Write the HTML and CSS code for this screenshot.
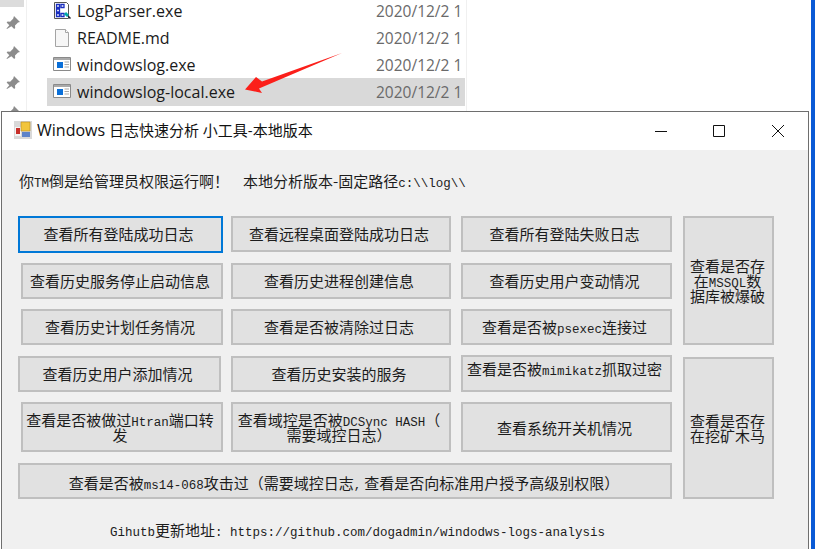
FILE: index.html
```html
<!DOCTYPE html>
<html lang="en">
<head>
    <meta charset="UTF-8">
    <title>windowslog-local</title>
    <link rel="stylesheet" href="styles.css">
</head>
<body>

    <!-- Explorer behind the tool window -->
    <div class="explorer">
        <div class="pin-strip">
            <div class="pin-selected"></div>
            <svg class="pin" viewBox="0 0 14 14"><path d="M8 0l6 6-2 .5-3 3 .2 2.5-1 1-2.8-2.8L1 13l-.5-.5 2.800-3.300L.6 6.500l1-1 2.500.2 3-3z"/></svg>
            <svg class="pin" viewBox="0 0 14 14"><path d="M8 0l6 6-2 .5-3 3 .2 2.5-1 1-2.8-2.8L1 13l-.5-.5 2.800-3.300L.6 6.500l1-1 2.500.2 3-3z"/></svg>
            <svg class="pin" viewBox="0 0 14 14"><path d="M8 0l6 6-2 .5-3 3 .2 2.5-1 1-2.8-2.8L1 13l-.5-.5 2.800-3.300L.6 6.500l1-1 2.500.2 3-3z"/></svg>
            <svg class="pin" viewBox="0 0 14 14"><path d="M8 0l6 6-2 .5-3 3 .2 2.5-1 1-2.8-2.8L1 13l-.5-.5 2.800-3.300L.6 6.500l1-1 2.500.2 3-3z"/></svg>
        </div>
        <div class="file-list">
            <div class="file-row">
                <svg class="file-icon" viewBox="0 0 18 18">
                    <path d="M1.500.5h12l2 2v14h-14z" fill="#fff" stroke="#555"/>
                    <path d="M3.500 2.500h3v3h-3zM8 2.500h3v3H8zM3.500 7h3v3h-3zM3.500 11.500h3v3h-3zM8 11.500h3v3H8z" fill="none" stroke="#1a2fc0" stroke-width="1.300"/>
                    <path d="M12 11l3 3" stroke="#0aa" stroke-width="3"/>
                    <path d="M15 14l2.500 2.500" stroke="#223" stroke-width="1.500"/>
                </svg>
                <span class="file-name">LogParser.exe</span>
                <span class="file-date">2020/12/2 1</span>
            </div>
            <div class="file-row">
                <svg class="file-icon" viewBox="0 0 18 18">
                    <path d="M2.500.5h10l3 3v14h-13z" fill="#f6f6f6" stroke="#a4a4a4"/>
                    <path d="M12.500.5v3h3" fill="#fff" stroke="#a4a4a4"/>
                </svg>
                <span class="file-name">README.md</span>
                <span class="file-date">2020/12/2 1</span>
            </div>
            <div class="file-row">
                <svg class="file-icon" viewBox="0 0 18 18">
                    <path d="M.5 1.500h17v13H.5z" fill="#fff" stroke="#8a8a8a"/>
                    <path d="M1 2h16v2H1z" fill="#a9a9a9"/>
                    <path d="M4 6h6v6H4z" fill="#0a6fd8"/>
                    <path d="M11.500 6H16M11.500 8.500H16M11.500 11H16" stroke="#a9a9a9"/>
                </svg>
                <span class="file-name">windowslog.exe</span>
                <span class="file-date">2020/12/2 1</span>
            </div>
            <div class="file-row selected">
                <svg class="file-icon" viewBox="0 0 18 18">
                    <path d="M.5 1.500h17v13H.5z" fill="#fff" stroke="#8a8a8a"/>
                    <path d="M1 2h16v2H1z" fill="#a9a9a9"/>
                    <path d="M4 6h6v6H4z" fill="#0a6fd8"/>
                    <path d="M11.500 6H16M11.500 8.500H16M11.500 11H16" stroke="#a9a9a9"/>
                </svg>
                <span class="file-name">windowslog-local.exe</span>
                <span class="file-date">2020/12/2 1</span>
            </div>
        </div>
    </div>

    <!-- Red arrow annotation -->
    <svg class="arrow" viewBox="0 0 100 41">
        <path d="M98 0L18 28.500 12 24 1 36.500 18 40 15 35.500z" fill="#fb1f1a"/>
    </svg>

    <div class="desktop-edge"></div>

    <div class="window">
        <div class="titlebar">
            <svg class="app-icon" viewBox="0 0 18 18">
                <path d="M0 0h18v18H0z" fill="#d9d9d9"/>
                <path d="M1 6h6v9H1z" fill="#f4f4f4"/>
                <path d="M2 7h4v6H2z" fill="#c8302a"/>
                <path d="M7 1h9v9H7z" fill="#f2c53c" stroke="#b58a20" stroke-width=".6"/>
                <path d="M8 11h8v5H8z" fill="#5d83c9"/>
            </svg>
            <span class="window-title"><span class="title-lat">Windows</span> 日志快速分析 小工具-本地版本</span>
            <div class="window-controls">
                <svg viewBox="0 0 46 38"><path d="M17 19.500h12" stroke="#111"/></svg>
                <svg viewBox="0 0 46 38"><path d="M17.500 13.500h11v11h-11z" fill="none" stroke="#111"/></svg>
                <svg viewBox="0 0 46 38"><path d="M17 13l12 12M29 13L17 25" stroke="#111"/></svg>
            </div>
        </div>

        <div class="window-body">
            <p class="status">
                <span>你<span class="lat">TM</span>倒是给管理员权限运行啊！</span>
                <span>本地分析版本-固定路径<span class="lat">c:\\log\\</span></span>
            </p>

            <div class="button-grid">
                <button class="btn focused">查看所有登陆成功日志</button>
                <button class="btn">查看远程桌面登陆成功日志</button>
                <button class="btn col3">查看所有登陆失败日志</button>
                <button class="btn side-top">查看是否存<br>在<span class="lat">MSSQL</span>数<br>据库被爆破</button>

                <button class="btn narrow">查看历史服务停止启动信息</button>
                <button class="btn">查看历史进程创建信息</button>
                <button class="btn col3">查看历史用户变动情况</button>

                <button class="btn narrow">查看历史计划任务情况</button>
                <button class="btn">查看是否被清除过日志</button>
                <button class="btn col3">查看是否被<span class="lat">psexec</span>连接过</button>

                <button class="btn">查看历史用户添加情况</button>
                <button class="btn">查看历史安装的服务</button>
                <button class="btn col3 clipped">查看是否被<span class="lat">mimikatz</span>抓取过密</button>
                <button class="btn side-bottom">查看是否存<br>在挖矿木马</button>

                <button class="btn narrow tall">查看是否被做过<span class="lat">Htran</span>端口转<br>发</button>
                <button class="btn tall">查看域控是否被<span class="lat">DCSync HASH</span>（<br>需要域控日志）</button>
                <button class="btn col3 tall">查看系统开关机情况</button>

                <button class="btn wide">查看是否被<span class="lat">ms14-068</span>攻击过（需要域控日志<span class="lat punct">,</span>查看是否向标准用户授予高级别权限）</button>
            </div>

            <p class="update-link"><span class="lat">Gihutb</span>更新地址<span class="lat">: </span><span class="lat">https://github.com/dogadmin/windodws-logs-analysis</span></p>
        </div>
    </div>

</body>
</html>
```

FILE: styles.css
```css
html, body {
    height: 100%;
}

body {
    position: relative;
    margin: 0;
    overflow: hidden;
    background-color: #fff;
    color: #1c1c1c;
    font-family: "Noto Sans CJK SC", "Noto Sans", sans-serif;
}

.explorer {
    display: flex;
    width: 466px;
    height: 111px;
    border-right: 1px solid #f0f0f0;
    overflow: hidden;
}

.pin-strip {
    display: flex;
    flex-direction: column;
    align-items: center;
    gap: 16px;
    width: 26px;
    flex-shrink: 0;
    border-right: 1px solid #f0f0f0;
}

.pin-selected {
    width: 24px;
    height: 7px;
    flex-shrink: 0;
    margin-right: 2px;
    margin-bottom: -7px;
    background-color: #dcdcdc;
}

.pin {
    width: 14px;
    height: 14px;
    flex-shrink: 0;
    fill: #8c8c8c;
}

.file-list {
    flex: 1;
    display: flex;
    flex-direction: column;
    margin-left: 20px;
    margin-right: 1px;
    margin-top: -3px;
    min-width: 0;
}

.file-row {
    display: flex;
    align-items: center;
    flex-shrink: 0;
    height: 27px;
    padding-left: 6px;
    box-sizing: border-box;
    padding-top: 1px;
    overflow: hidden;
    white-space: nowrap;
}

.file-row.selected {
    height: 28px;
    padding-top: 0;
    background-color: #d9d9d9;
}

.file-icon {
    width: 18px;
    height: 18px;
    flex-shrink: 0;
    margin-right: 6px;
}

.file-name {
    width: 299px;
    flex-shrink: 0;
    font-family: "Open Sans", sans-serif;
    font-size: 16px;
    color: #1a1a1a;
}

.file-date {
    font-family: "Open Sans", sans-serif;
    font-size: 15.500px;
    color: #6a6a6a;
}

.arrow {
    position: absolute;
    left: 244px;
    top: 53px;
    width: 100px;
    height: 41px;
}

.desktop-edge {
    position: absolute;
    top: 0;
    right: 0;
    bottom: 0;
    width: 4px;
    background-color: #0a5ad6;
}

.window {
    position: absolute;
    left: 1px;
    top: 111px;
    width: 806px;
    height: 440px;
    border: 1px solid #6e6e6e;
    background-color: #f0f0f0;
}

.titlebar {
    display: flex;
    align-items: center;
    height: 38px;
    padding-left: 12px;
    background-color: #fff;
}

.app-icon {
    width: 18px;
    height: 18px;
    margin-right: 5px;
    margin-bottom: 2px;
}

.window-title {
    margin-bottom: 3px;
    font-family: "Open Sans", "Noto Sans CJK SC", sans-serif;
    font-size: 15px;
    color: #111;
}

.title-lat {
    font-size: 16px;
}

.window-controls {
    display: flex;
    gap: 13px;
    margin-left: auto;
    margin-right: 7px;
}

.window-controls svg {
    width: 46px;
    height: 38px;
}

.window-controls svg:first-child {
    margin-right: -1px;
}

.window-body {
    padding: 0 0 0 16px;
}

.status {
    display: flex;
    gap: 14px;
    height: 66px;
    margin: 0;
    padding-left: 1px;
    padding-top: 22px;
    box-sizing: border-box;
    font-size: 15px;
    line-height: 18px;
}

.lat {
    font-family: "Liberation Mono", monospace;
    font-size: 12.500px;
    line-height: 0;
}

.punct {
    margin-right: 3px;
}

.button-grid {
    display: grid;
    grid-template-columns: 213px 230px 222px 91px;
    grid-template-rows: 47px 46px 47px 46px 61px 36px;
}

.btn {
    display: block;
    height: 36px;
    margin: 0 10px 0 0;
    padding: 0 4px 2px 0;
    border: 2px solid #bfbfbf;
    background-color: #e1e1e1;
    color: #1c1c1c;
    font-family: "Noto Sans CJK SC", sans-serif;
    font-size: 15px;
    line-height: 15px;
    white-space: nowrap;
    overflow: hidden;
}

.btn.focused {
    height: 37px;
    margin-right: 8px;
    border-color: #0078d7;
}

.btn.narrow {
    margin-left: 3px;
    margin-right: 8px;
}

.btn.col3 {
    margin-right: 11px;
}

.btn.tall {
    height: 50px;
    padding-top: 2px;
}

.btn.clipped {
    margin-top: -1px;
    height: 37px;
    padding-bottom: 11px;
}

.btn.wide {
    grid-column: 1 / span 3;
    margin-right: 11px;
    padding-top: 4px;
    padding-right: 2px;
}

.btn.side-top {
    grid-column: 4;
    grid-row: 1 / span 3;
    height: 129px;
    margin-right: 0;
    padding-top: 2px;
    padding-right: 2px;
}

.btn.side-bottom {
    grid-column: 4;
    grid-row: 4 / span 3;
    height: 142px;
    margin-top: 1px;
    margin-right: 0;
    padding-bottom: 0;
    padding-right: 2px;
}

.update-link {
    margin: 0;
    padding: 22px 0 0 92px;
    font-size: 15px;
    line-height: 18px;
    white-space: pre;
}
```
